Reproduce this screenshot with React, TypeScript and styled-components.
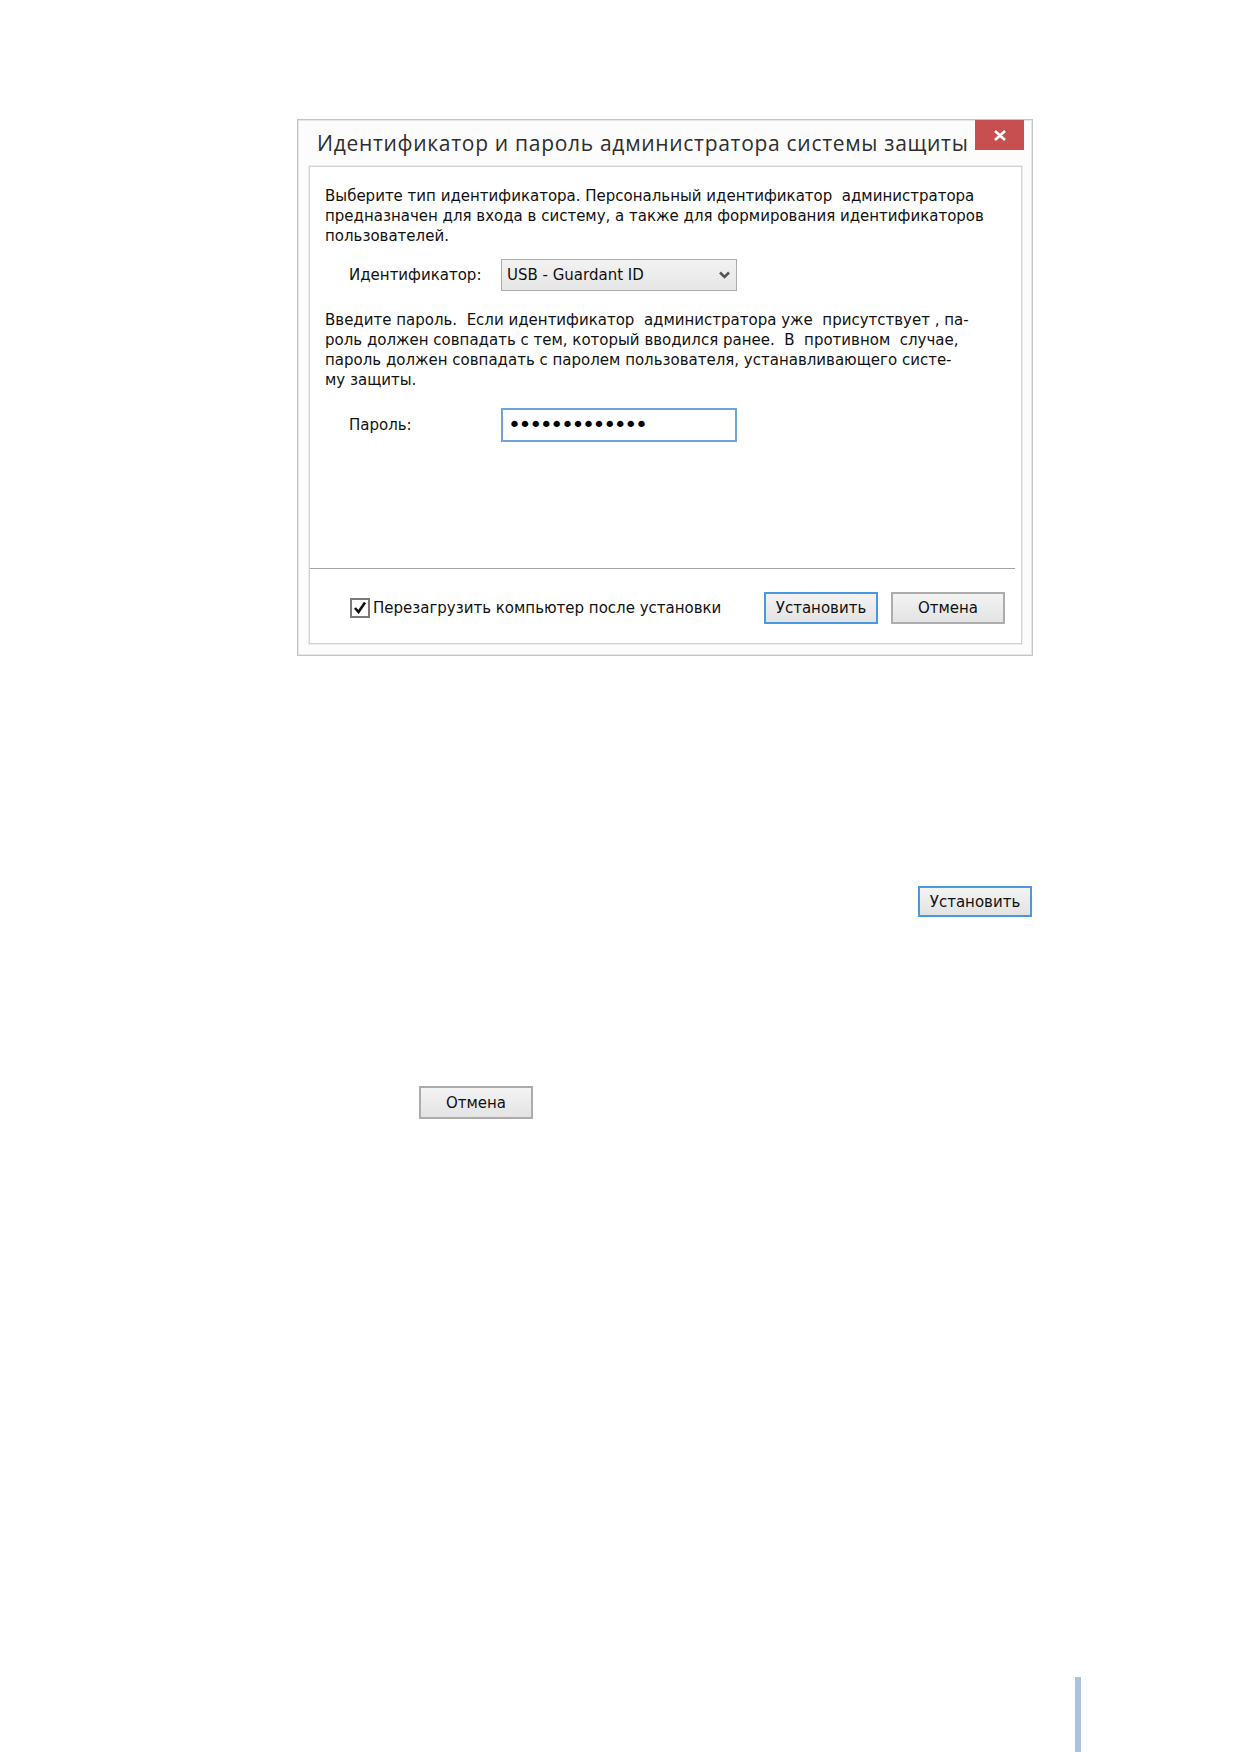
import React from "react";
import styled, { createGlobalStyle } from "styled-components";

const GlobalStyle = createGlobalStyle`
  html, body {
    margin: 0;
    padding: 0;
    background: #ffffff;
  }
  body {
    font-family: "DejaVu Sans", "Liberation Sans", sans-serif;
    color: #111;
  }
`;

const Page = styled.div`
  width: 1239px;
  min-height: 1752px;
  display: flex;
  flex-direction: column;
  align-items: flex-start;
  box-sizing: border-box;
  padding-top: 119px;
`;

/* ---------- dialog window ---------- */

const Window = styled.div`
  margin-left: 297px;
  width: 736px;
  height: 537px;
  box-sizing: border-box;
  border: 1px solid #c4c4c4;
  box-shadow: inset 0 0 0 1px #e6e6e6;
  background: #fcfcfc;
  display: flex;
  flex-direction: column;
  padding: 0 10px 11px 11px;
`;

const TitleBar = styled.div`
  height: 46px;
  display: flex;
  align-items: flex-start;
  justify-content: space-between;
`;

const Title = styled.div`
  font-family: "Open Sans", "Noto Sans", sans-serif;
  font-size: 21px;
  letter-spacing: 0.7px;
  color: #2e2e2e;
  margin-top: 9px;
  margin-left: 8px;
  white-space: nowrap;
`;

const CloseButton = styled.div`
  width: 49px;
  height: 30px;
  background: #c74f4f;
  display: flex;
  align-items: center;
  justify-content: center;
  margin-right: -2px;
`;

const Panel = styled.div`
  flex: 1;
  box-sizing: border-box;
  border: 1px solid #d2d2d2;
  box-shadow: 0 0 0 1px #ececec;
  background: #ffffff;
  display: flex;
  flex-direction: column;
`;

const Body = styled.div`
  flex: 1;
  padding: 19px 16px 0 15px;
  display: flex;
  flex-direction: column;
`;

const Text = styled.p<{ $top?: number }>`
  margin: ${(p) => p.$top ?? 0}px 0 0 0;
  font-size: 15px;
  line-height: 20px;
  white-space: pre;
  color: #111;
`;

const FieldRow = styled.div<{ $top: number }>`
  margin-top: ${(p) => p.$top}px;
  padding-left: 24px;
  display: grid;
  grid-template-columns: 152px 236px;
  align-items: center;
`;

const Label = styled.span`
  font-size: 15px;
  color: #111;
`;

const Select = styled.div`
  box-sizing: border-box;
  height: 32px;
  border: 1px solid #acacac;
  background: linear-gradient(#f2f2f2, #e6e6e6);
  display: flex;
  align-items: center;
  justify-content: space-between;
  padding: 0 6px 0 5px;
  font-size: 15px;
  color: #111;
`;

const PasswordField = styled.div`
  box-sizing: border-box;
  height: 34px;
  border: 2px solid #6fa3dc;
  background: #fff;
  display: flex;
  align-items: center;
  padding-left: 5px;
  font-size: 22px;
  line-height: 1;
  letter-spacing: -2.4px;
  color: #000;
  overflow: hidden;
`;

const Separator = styled.div`
  height: 1px;
  background: #a3a3a3;
  margin-right: 6px;
`;

const Footer = styled.div`
  height: 74px;
  box-sizing: border-box;
  display: flex;
  align-items: center;
  padding: 3px 16px 0 40px;
`;

const CheckLabel = styled.label`
  display: flex;
  align-items: center;
  gap: 3px;
  font-size: 15px;
  color: #111;
`;

const Box = styled.span`
  width: 20px;
  height: 20px;
  box-sizing: border-box;
  border: 2px solid #7a7a7a;
  background: #fff;
  display: flex;
  align-items: center;
  justify-content: center;
`;

const Buttons = styled.div`
  margin-left: auto;
  display: flex;
  gap: 13px;
`;

const Button = styled.div<{ $primary?: boolean; $h?: number }>`
  width: 114px;
  height: ${(p) => p.$h ?? 32}px;
  box-sizing: border-box;
  border: 2px solid ${(p) => (p.$primary ? "#4a98e2" : "#acacac")};
  background: linear-gradient(#f3f3f3, #e3e3e3);
  display: flex;
  align-items: center;
  justify-content: center;
  font-size: 15px;
  color: #111;
`;

/* ---------- standalone button samples ---------- */

const Sample = styled.div<{ $top: number; $left: number }>`
  margin-top: ${(p) => p.$top}px;
  margin-left: ${(p) => p.$left}px;
`;

const PageMark = styled.div`
  margin-top: auto;
  margin-left: 1075px;
  width: 6px;
  height: 75px;
  background: #a9c3e3;
`;

const CloseIcon = () => (
  <svg width="14" height="11" viewBox="0 0 14 11">
    <path d="M2 1 L12 10 M12 1 L2 10" stroke="#fff" strokeWidth="2.6" />
  </svg>
);

const Chevron = () => (
  <svg width="11" height="8" viewBox="0 0 11 8">
    <path d="M1 1.5 L5.5 6 L10 1.5" fill="none" stroke="#555" strokeWidth="2.6" />
  </svg>
);

const Check = () => (
  <svg width="14" height="13" viewBox="0 0 14 13">
    <path d="M2 7 L5.5 11 L12 1.5" fill="none" stroke="#111" strokeWidth="2.6" />
  </svg>
);

export default function App() {
  return (
    <>
      <GlobalStyle />
      <Page>
        <Window>
          <TitleBar>
            <Title>Идентификатор и пароль администратора системы защиты</Title>
            <CloseButton>
              <CloseIcon />
            </CloseButton>
          </TitleBar>
          <Panel>
            <Body>
              <Text>
                {"Выберите тип идентификатора. Персональный идентификатор  администратора\n"}
                {"предназначен для входа в систему, а также для формирования идентификаторов\n"}
                {"пользователей."}
              </Text>
              <FieldRow $top={13}>
                <Label>Идентификатор:</Label>
                <Select>
                  <span>USB - Guardant ID</span>
                  <Chevron />
                </Select>
              </FieldRow>
              <Text $top={19}>
                {"Введите пароль.  Если идентификатор  администратора уже  присутствует , па-\n"}
                {"роль должен совпадать с тем, который вводился ранее.  В  противном  случае,\n"}
                {"пароль должен совпадать с паролем пользователя, устанавливающего систе-\n"}
                {"му защиты."}
              </Text>
              <FieldRow $top={18}>
                <Label>Пароль:</Label>
                <PasswordField>{"•••••••••••••"}</PasswordField>
              </FieldRow>
            </Body>
            <Separator />
            <Footer>
              <CheckLabel>
                <Box>
                  <Check />
                </Box>
                Перезагрузить компьютер после установки
              </CheckLabel>
              <Buttons>
                <Button $primary>Установить</Button>
                <Button>Отмена</Button>
              </Buttons>
            </Footer>
          </Panel>
        </Window>
        <Sample $top={230} $left={918}>
          <Button $primary $h={31}>Установить</Button>
        </Sample>
        <Sample $top={169} $left={419}>
          <Button $h={33}>Отмена</Button>
        </Sample>
        <PageMark />
      </Page>
    </>
  );
}
